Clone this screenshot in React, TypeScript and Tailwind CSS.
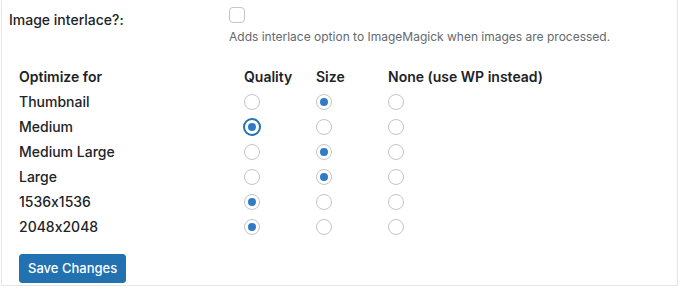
import React, {useState} from 'react';

type Choice = 'quality' | 'size' | 'none';

const sizes: {name: string; value: Choice}[] = [
    {name: 'Thumbnail', value: 'size'},
    {name: 'Medium', value: 'quality'},
    {name: 'Medium Large', value: 'size'},
    {name: 'Large', value: 'size'},
    {name: '1536x1536', value: 'quality'},
    {name: '2048x2048', value: 'quality'},
];

const Radio: React.FC<{checked: boolean; focused?: boolean; onClick: () => void}> = ({checked, focused, onClick}) => (
    <button
        type="button"
        onClick={onClick}
        className={
            focused
                ? "flex w-[16px] h-[16px] items-center justify-center rounded-full border border-[#2271b1] ring-1 ring-[#2271b1] bg-white"
                : "flex w-[16px] h-[16px] items-center justify-center rounded-full border border-[#c3c4c7] bg-white"
        }
    >
        {checked && <span className="w-[8px] h-[8px] rounded-full bg-[#2f7bc4]"/>}
    </button>
);

const App: React.FC = () => {
    const [choices, setChoices] = useState<Choice[]>(sizes.map(s => s.value));
    const [interlace, setInterlace] = useState(false);

    const pick = (i: number, v: Choice) => {
        setChoices(prev => prev.map((c, j) => (j === i ? v : c)));
    };

    return (
        <div className="w-[680px] h-[290px] bg-white font-['Inter','Liberation_Sans',sans-serif] [font-feature-settings:'calt'_0] text-[#1d2327]">
            <div className="mx-[1px] w-[677px] h-[286px] border border-t-[#ececec] border-x-[#e6e6e6] border-b-[#e6e6e6] border-t-0 bg-white">
                <div className="flex pt-[7px]">
                    <div className="w-[227px] pl-[7px] pt-[3px] text-[14px] leading-[20px] font-medium">
                        Image interlace?:
                    </div>
                    <div className="flex flex-col">
                        <button
                            type="button"
                            onClick={() => setInterlace(!interlace)}
                            className="w-[16px] h-[16px] rounded-[4px] border border-[#c3c4c7] bg-white flex items-center justify-center text-[#2271b1] text-[12px]"
                        >
                            {interlace ? '✓' : ''}
                        </button>
                        <p className="mt-[5px] text-[12px] leading-[18px] text-[#646970]">
                            Adds interlace option to ImageMagick when images are processed.
                        </p>
                    </div>
                </div>

                <div className="mt-[18px] pl-[17px] grid grid-cols-[225px_72px_72px_1fr] text-[14px]">
                    <div className="h-[25px] flex items-center font-semibold">Optimize for</div>
                    <div className="h-[25px] flex items-center font-semibold">Quality</div>
                    <div className="h-[25px] flex items-center font-semibold">Size</div>
                    <div className="h-[25px] flex items-center font-semibold">None (use WP instead)</div>

                    {sizes.map((s, i) => (
                        <React.Fragment key={s.name}>
                            <div className="h-[25px] flex items-center font-medium">{s.name}</div>
                            <div className="h-[25px] flex items-center">
                                <Radio checked={choices[i] === 'quality'} focused={i === 1} onClick={() => pick(i, 'quality')}/>
                            </div>
                            <div className="h-[25px] flex items-center">
                                <Radio checked={choices[i] === 'size'} onClick={() => pick(i, 'size')}/>
                            </div>
                            <div className="h-[25px] flex items-center">
                                <Radio checked={choices[i] === 'none'} onClick={() => pick(i, 'none')}/>
                            </div>
                        </React.Fragment>
                    ))}
                </div>

                <div className="pl-[17px] mt-[15px]">
                    <button
                        type="button"
                        className="h-[29px] px-[8px] rounded-[3px] bg-[#2271b1] border border-[#2271b1] text-white text-[13px] font-medium leading-[27px]"
                    >
                        Save Changes
                    </button>
                </div>
            </div>
        </div>
    );
};

export default App;
